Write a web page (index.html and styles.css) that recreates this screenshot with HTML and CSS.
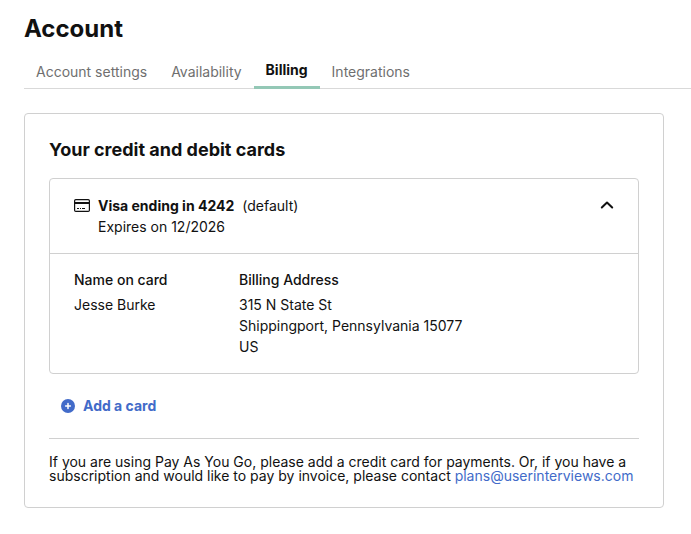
FILE: index.html
```html
<!DOCTYPE html>
<html lang="en">
<head>
<meta charset="utf-8">
<title>Account – Billing</title>
<link rel="stylesheet" href="styles.css">
</head>
<body>
<header class="account-header">
  <h1 class="page-title">Account</h1>
  <nav class="tabs" aria-label="Account">
    <a class="tab" href="#settings">Account settings</a>
    <a class="tab" href="#availability">Availability</a>
    <a class="tab tab-active" href="#billing" aria-current="page">Billing</a>
    <a class="tab" href="#integrations">Integrations</a>
  </nav>
</header>
<main class="panel">
  <h2 class="panel-title">Your credit and debit cards</h2>
  <section class="card">
    <div class="card-head">
      <svg class="card-icon" viewBox="0 0 16 13" aria-hidden="true"><rect x=".6" y=".6" width="14.800" height="11.800" rx="1.200" fill="none" stroke="currentColor" stroke-width="1.200"/><path fill="currentColor" d="M1 3h14v2H1zM3 9h2v1H3zM6 9h1v1H6zM8 9h3v1H8z"/></svg>
      <div class="card-summary">
        <p class="card-line"><strong class="card-name">Visa ending in 4242</strong><span>(default)</span></p>
        <p class="card-line">Expires on 12/2026</p>
      </div>
      <button class="toggle" type="button" aria-label="Collapse card details" aria-expanded="true"><svg class="chevron" viewBox="0 0 14 8" aria-hidden="true"><path d="M1.800 6.500L7 1.500l5.200 5"/></svg></button>
    </div>
    <dl class="card-details">
      <div class="detail detail-name"><dt>Name on card</dt><dd>Jesse Burke</dd></div>
      <div class="detail"><dt>Billing Address</dt><dd>315 N State St<br>Shippingport, Pennsylvania 15077<br>US</dd></div>
    </dl>
  </section>
  <button class="add-card" type="button"><svg class="add-icon" viewBox="0 0 14 14" aria-hidden="true"><circle cx="7" cy="7" r="7" fill="currentColor"/><path d="M7 4.600v4.800M4.600 7h4.800" stroke="#fff" stroke-width="1.500" stroke-linecap="round"/></svg>Add a card</button>
  <p class="billing-note">If you are using Pay As You Go, please add a credit card for payments. Or, if you have a subscription and would like to pay by invoice, please contact <a class="link" href="mailto:plans@userinterviews.com">plans@userinterviews.com</a></p>
</main>
</body>
</html>
```

FILE: styles.css
```css
* { box-sizing: border-box; }
body { margin: 0; background: #fff; color: #111; font: 14px/21px Inter, sans-serif; }
h1, h2, p, dl, dd { margin: 0; }
button { border: 0; background: none; padding: 0; font: inherit; color: inherit; }

.account-header { padding-left: 24px; }
.page-title { padding-top: 13px; font-size: 24px; line-height: 32px; font-weight: 700; }
.tabs { display: flex; margin-top: 11px; height: 33px; border-bottom: 1px solid #d9d9d9; }
.tab { height: 33px; padding: 5px 12px 0; color: #6f6f6f; text-decoration: none; }
.tab-active { padding-top: 3px; color: #111; font-weight: 700; border-bottom: 3px solid #94c8b6; }

.panel { margin: 24px 27px 24px 24px; padding: 24px; border: 1px solid #d0d0d0; border-radius: 4px; }
.panel-title { font-size: 18px; line-height: 24px; font-weight: 700; }
.card { margin-top: 16px; border: 1px solid #d0d0d0; border-radius: 4px; }
.card-head { display: flex; align-items: flex-start; padding: 16px 24px; border-bottom: 1px solid #d0d0d0; }
.card-icon { width: 16px; height: 13px; margin: 4px 8px 0 0; }
.card-summary { flex: 1; }
.card-name { margin-right: 8px; font-weight: 700; }
.toggle { display: flex; padding: 6px 0; }
.chevron { width: 14px; height: 8px; fill: none; stroke: currentColor; stroke-width: 2; stroke-linecap: round; stroke-linejoin: round; }
.card-details { display: flex; padding: 15px 24px 16px; }
.detail-name { width: 165px; }
dt { margin-bottom: 4px; font-weight: 500; }

.add-card { display: flex; align-items: center; gap: 8px; margin: 21px 12px 22px; color: #426bc9; font-weight: 700; }
.add-icon { width: 14px; height: 14px; }
.billing-note { padding-top: 16px; border-top: 1px solid #d0d0d0; line-height: 14px; }
.link { color: #426bc9; text-decoration: none; }
```
